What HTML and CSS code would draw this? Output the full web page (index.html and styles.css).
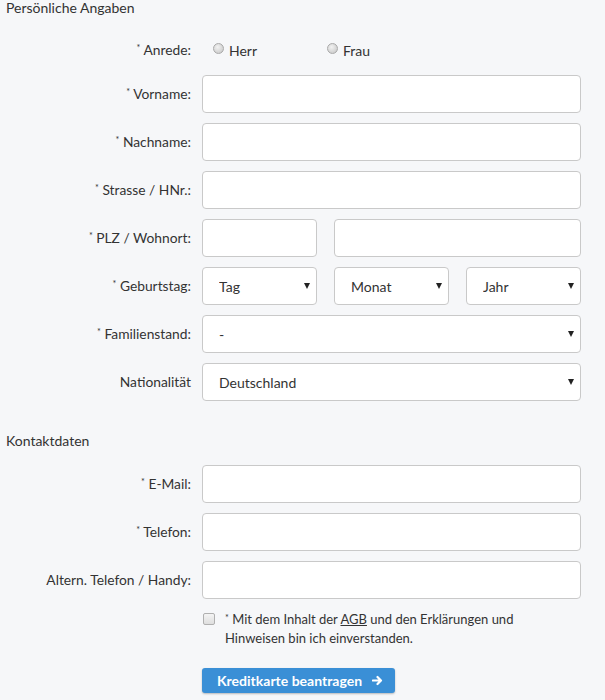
FILE: index.html
```html
<!DOCTYPE html>
<html lang="de">
<head>
<meta charset="utf-8">
<title>Formular</title>
<link rel="stylesheet" href="styles.css">
</head>
<body>
<form class="form">
  <h2 class="section-title">Persönliche Angaben</h2>

  <div class="row row-radio">
    <label class="label"><span class="req">*</span> Anrede:</label>
    <div class="radio-group">
      <label class="radio-option"><input type="radio" name="anrede" class="radio"> Herr</label>
      <label class="radio-option"><input type="radio" name="anrede" class="radio"> Frau</label>
    </div>
  </div>

  <div class="row">
    <label class="label"><span class="req">*</span> Vorname:</label>
    <input class="input" type="text">
  </div>

  <div class="row">
    <label class="label"><span class="req">*</span> Nachname:</label>
    <input class="input" type="text">
  </div>

  <div class="row">
    <label class="label"><span class="req">*</span> Strasse / HNr.:</label>
    <input class="input" type="text">
  </div>

  <div class="row">
    <label class="label"><span class="req">*</span> PLZ / Wohnort:</label>
    <div class="split split-plz">
      <input class="input" type="text">
      <input class="input" type="text">
    </div>
  </div>

  <div class="row">
    <label class="label"><span class="req">*</span> Geburtstag:</label>
    <div class="split split-date">
      <div class="select-wrap"><select class="select"><option>Tag</option></select></div>
      <div class="select-wrap"><select class="select"><option>Monat</option></select></div>
      <div class="select-wrap"><select class="select"><option>Jahr</option></select></div>
    </div>
  </div>

  <div class="row">
    <label class="label"><span class="req">*</span> Familienstand:</label>
    <div class="select-wrap"><select class="select"><option>-</option></select></div>
  </div>

  <div class="row">
    <label class="label">Nationalität</label>
    <div class="select-wrap"><select class="select"><option>Deutschland</option></select></div>
  </div>

  <h2 class="section-title section-title-2">Kontaktdaten</h2>

  <div class="row">
    <label class="label"><span class="req">*</span> E-Mail:</label>
    <input class="input" type="email">
  </div>

  <div class="row">
    <label class="label"><span class="req">*</span> Telefon:</label>
    <input class="input" type="tel">
  </div>

  <div class="row">
    <label class="label">Altern. Telefon / Handy:</label>
    <input class="input" type="tel">
  </div>

  <div class="row row-check">
    <div></div>
    <label class="check">
      <input type="checkbox" class="checkbox">
      <span class="check-text"><span class="req">*</span> Mit dem Inhalt der <a class="link" href="#">AGB</a> und den Erklärungen und<br>Hinweisen bin ich einverstanden.</span>
    </label>
  </div>

  <div class="row row-btn">
    <div></div>
    <div>
      <button type="button" class="btn">Kreditkarte beantragen
        <svg class="btn-icon" viewBox="0 0 12 12" width="11" height="11" aria-hidden="true">
          <path d="M1 6 H9.5 M6 2.2 L9.8 6 L6 9.8" fill="none" stroke="#fff" stroke-width="2.4" stroke-linecap="round" stroke-linejoin="round"/>
        </svg>
      </button>
    </div>
  </div>
</form>
</body>
</html>
```

FILE: styles.css
```css
* { box-sizing: border-box; }

html, body {
  margin: 0;
  padding: 0;
  background: #f6f7f9;
}

body {
  font-family: Lato, "Open Sans", Arial, sans-serif;
  color: #333;
  width: 605px;
  height: 700px;
  overflow: hidden;
}

.form {
  padding: 0 24px 0 0;
  margin: 0;
}

.section-title {
  margin: 0;
  padding-left: 6px;
  font-size: 14px;
  font-weight: 400;
  line-height: 16px;
  color: #333;
}

.section-title-2 {
  margin-top: 32px;
  margin-bottom: 16px;
}

.row {
  display: grid;
  grid-template-columns: 191px 1fr;
  column-gap: 11px;
  align-items: center;
  height: 38px;
  margin-bottom: 10px;
}

.row-radio {
  height: 28px;
  margin-top: 20px;
  margin-bottom: 11px;
}

.label {
  text-align: right;
  font-size: 13.8px;
  line-height: 17px;
  color: #333;
  white-space: nowrap;
  position: relative;
  top: -1px;
}

.req {
  display: inline-block;
  font-size: 9px;
  line-height: 9px;
  vertical-align: top;
  margin-top: 2px;
}

.radio-group {
  display: flex;
  align-items: center;
  padding-left: 11px;
}

.radio-option {
  display: flex;
  align-items: center;
  gap: 5px;
  width: 114px;
  font-size: 14px;
  color: #333;
}

.radio {
  appearance: none;
  -webkit-appearance: none;
  margin: 0;
  width: 11px;
  height: 11px;
  border-radius: 50%;
  border: 1px solid #a9a9a9;
  background: radial-gradient(circle at 40% 35%, #f2f2f2 0%, #d6d6d6 60%, #c4c4c4 100%);
  position: relative;
  top: -2px;
}

.input,
.select {
  display: block;
  width: 100%;
  height: 38px;
  margin: 0;
  border: 1px solid #c9c9c9;
  border-radius: 4px;
  background: #fff;
  font-family: inherit;
  font-size: 14px;
  color: #333;
  padding: 0 16px;
  outline: none;
}

.select {
  appearance: none;
  -webkit-appearance: none;
  padding-right: 28px;
}

.select-wrap {
  position: relative;
}

.select-wrap::after {
  content: "";
  position: absolute;
  right: 7px;
  top: 16px;
  border-left: 3.5px solid transparent;
  border-right: 3.5px solid transparent;
  border-top: 6px solid #222;
  pointer-events: none;
}

.split {
  display: grid;
  height: 38px;
}

.split-plz {
  grid-template-columns: 115px 1fr;
  column-gap: 17px;
}

.split-date {
  grid-template-columns: 115px 115px 115px;
  justify-content: space-between;
}

.row-check {
  height: auto;
  margin-top: 11px;
  margin-bottom: 19px;
  align-items: start;
}

.check {
  display: flex;
  align-items: flex-start;
  padding-left: 1px;
}

.checkbox {
  appearance: none;
  -webkit-appearance: none;
  flex: none;
  margin: 3px 10px 0 0;
  width: 12px;
  height: 12px;
  border: 1px solid #b0b0b0;
  border-radius: 2px;
  background: linear-gradient(#f4f4f4, #dedede);
}

.check-text {
  font-size: 13px;
  line-height: 19px;
  color: #333;
}

.check-text .req {
  margin-top: 3px;
}

.link {
  color: #333;
  text-decoration: underline;
}

.row-btn {
  height: 26px;
  margin-bottom: 0;
}

.btn {
  display: inline-flex;
  align-items: center;
  gap: 10px;
  width: 193px;
  height: 25px;
  padding: 0 12px 0 15px;
  border: none;
  border-radius: 3px;
  background: #3a8fd6;
  color: #fff;
  font-family: inherit;
  font-size: 14px;
  font-weight: 700;
  white-space: nowrap;
  box-shadow: 0 1px 2px rgba(0, 0, 0, 0.25);
  cursor: pointer;
}

.btn-icon {
  display: block;
  flex: none;
}
```
